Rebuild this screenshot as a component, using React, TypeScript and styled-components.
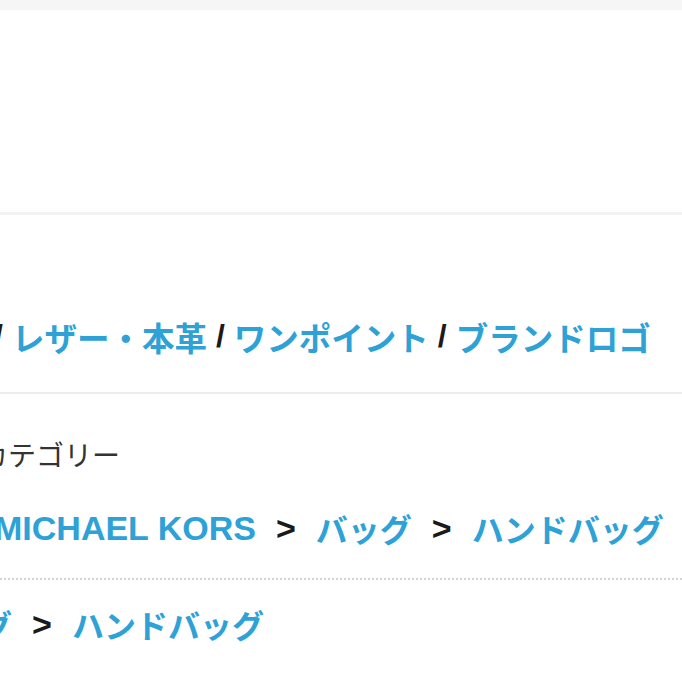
import React from "react";
import styled, { createGlobalStyle } from "styled-components";

const GlobalStyle = createGlobalStyle`
  html, body {
    margin: 0;
    padding: 0;
    background: #fff;
    overflow: hidden;
  }
  body {
    font-family: "Liberation Sans", "Noto Sans CJK JP", sans-serif;
    color: #333;
  }
`;

const Page = styled.div`
  width: 682px;
  height: 682px;
  overflow: hidden;
  display: flex;
  flex-direction: column;
  background: #fff;
`;

const TopBand = styled.div`
  height: 10px;
  background: #f6f6f6;
`;

const EmptyPanel = styled.div`
  height: 204px;
  background: #fff;
`;

const Divider = styled.div<{ $size: number; $color: string }>`
  height: ${(p) => p.$size}px;
  background: ${(p) => p.$color};
`;

const Section = styled.section<{ $top: number; $bottom: number }>`
  padding: ${(p) => p.$top}px 0 ${(p) => p.$bottom}px;
  overflow: hidden;
`;

const Row = styled.div<{ $shift: number }>`
  display: flex;
  align-items: center;
  white-space: nowrap;
  height: 40px;
  margin-left: ${(p) => p.$shift}px;
`;

const TagLink = styled.a`
  color: #2ea2d6;
  font-weight: 700;
  font-size: 32.5px;
  text-decoration: none;
`;

const Slash = styled.span`
  color: #1a1a1a;
  font-size: 32px;
  font-weight: 700;
  margin: 0 9px;
`;

const Label = styled.div<{ $shift: number }>`
  font-size: 28px;
  line-height: 36px;
  color: #333;
  white-space: nowrap;
  margin-left: ${(p) => p.$shift}px;
`;

const Crumb = styled.a<{ $latin?: boolean }>`
  color: #2ea2d6;
  font-weight: 700;
  font-size: ${(p) => (p.$latin ? 34 : 32)}px;
  text-decoration: none;
`;

const Arrow = styled.span`
  color: #1a1a1a;
  font-size: 34px;
  font-weight: 700;
  margin: 0 20px;
`;

const Spacer = styled.div<{ $h: number }>`
  height: ${(p) => p.$h}px;
`;

const Dotted = styled.div`
  border-top: 2px dotted #d4d4d4;
  margin: 30px 0 24px;
`;

const tags = ["レザー・本革", "ワンポイント", "ブランドロゴ"];

const Breadcrumb: React.FC<{ items: string[]; shift: number }> = ({ items, shift }) => (
  <Row $shift={shift}>
    {items.map((item, i) => (
      <React.Fragment key={item + i}>
        {i > 0 && <Arrow>&gt;</Arrow>}
        <Crumb href="#" $latin={/^[A-Z ]+$/.test(item)}>
          {item}
        </Crumb>
      </React.Fragment>
    ))}
  </Row>
);

export default function App() {
  return (
    <Page>
      <GlobalStyle />
      <TopBand />
      <EmptyPanel />
      <Divider $size={3} $color="#f2f2f2" />

      <Section $top={102} $bottom={36}>
        <Row $shift={-15}>
          {tags.map((t) => (
            <React.Fragment key={t}>
              <Slash>/</Slash>
              <TagLink href="#">{t}</TagLink>
            </React.Fragment>
          ))}
        </Row>
      </Section>

      <Divider $size={2} $color="#ededed" />

      <Section $top={45} $bottom={40}>
        <Label $shift={-20}>カテゴリー</Label>
        <Spacer $h={33} />
        <Breadcrumb shift={-6} items={["MICHAEL KORS", "バッグ", "ハンドバッグ"]} />
        <Dotted />
        <Breadcrumb shift={-84} items={["バッグ", "ハンドバッグ"]} />
      </Section>
    </Page>
  );
}
